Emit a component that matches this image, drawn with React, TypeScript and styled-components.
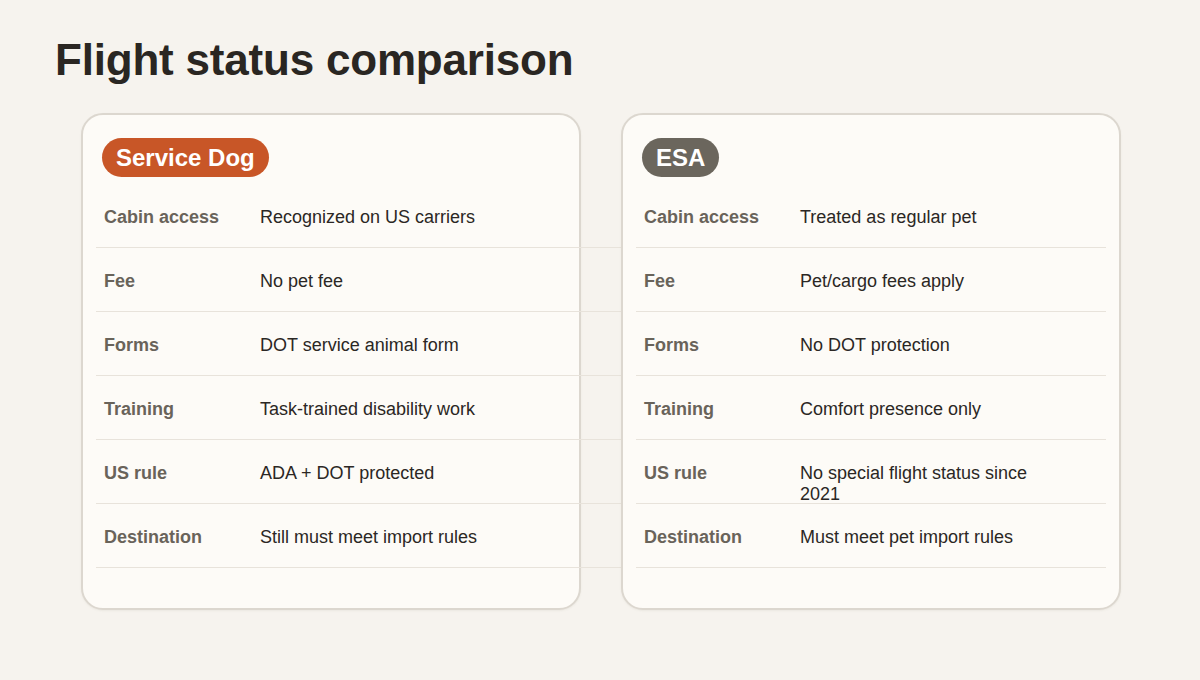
import React from "react";
import styled, { createGlobalStyle } from "styled-components";

const Global = createGlobalStyle`
  html, body { margin: 0; padding: 0; background: #f6f3ee; }
  body { font-family: "Liberation Sans", Arial, sans-serif; }
`;

const Page = styled.div`
  width: 1200px;
  height: 680px;
  box-sizing: border-box;
  padding-top: 34px;
  overflow: hidden;
`;

const Title = styled.h1`
  margin: 0 0 26px 55px;
  font-size: 44px;
  line-height: 1.2;
  font-weight: 700;
  letter-spacing: -0.2px;
  color: #2a2622;
`;

const Cards = styled.div`
  display: flex;
  gap: 40px;
  margin-left: 81px;
`;

const Card = styled.section`
  width: 500px;
  box-sizing: border-box;
  background: #fdfbf7;
  border: 2px solid #dcd7cf;
  border-radius: 22px;
  padding: 23px 13px 40px;
  box-shadow: 0 1px 2px rgba(120, 110, 95, 0.08);
`;

const Badge = styled.div<{ $tone: "orange" | "gray" }>`
  display: inline-block;
  margin: 0 0 7px 6px;
  padding: 0 14px;
  height: 39px;
  line-height: 39px;
  border-radius: 20px;
  font-size: 24px;
  font-weight: 700;
  color: #ffffff;
  background: ${(p) => (p.$tone === "orange" ? "#c85627" : "#6b665d")};
`;

const Table = styled.div<{ $bleed?: boolean }>`
  display: flex;
  flex-direction: column;
  margin-right: ${(p) => (p.$bleed ? "-80px" : "0")};
`;

const Row = styled.div`
  display: grid;
  grid-template-columns: 156px 260px;
  box-sizing: border-box;
  height: 64px;
  padding: 23px 8px 0;
  border-bottom: 1px solid #e8e3db;
  font-size: 18px;
  line-height: 20.7px;
`;

const Label = styled.div`
  font-weight: 700;
  color: #69635a;
`;

const Value = styled.div`
  color: #2b2724;
`;

type Item = [string, string];

const serviceRows: Item[] = [
  ["Cabin access", "Recognized on US carriers"],
  ["Fee", "No pet fee"],
  ["Forms", "DOT service animal form"],
  ["Training", "Task-trained disability work"],
  ["US rule", "ADA + DOT protected"],
  ["Destination", "Still must meet import rules"],
];

const esaRows: Item[] = [
  ["Cabin access", "Treated as regular pet"],
  ["Fee", "Pet/cargo fees apply"],
  ["Forms", "No DOT protection"],
  ["Training", "Comfort presence only"],
  ["US rule", "No special flight status since 2021"],
  ["Destination", "Must meet pet import rules"],
];

const Compare = ({
  title,
  tone,
  rows,
  bleed,
}: {
  title: string;
  tone: "orange" | "gray";
  rows: Item[];
  bleed?: boolean;
}) => (
  <Card>
    <Badge $tone={tone}>{title}</Badge>
    <Table $bleed={bleed}>
      {rows.map(([l, v]) => (
        <Row key={l}>
          <Label>{l}</Label>
          <Value>{v}</Value>
        </Row>
      ))}
    </Table>
  </Card>
);

export default function App() {
  return (
    <Page>
      <Global />
      <Title>Flight status comparison</Title>
      <Cards>
        <Compare title="Service Dog" tone="orange" rows={serviceRows} bleed />
        <Compare title="ESA" tone="gray" rows={esaRows} />
      </Cards>
    </Page>
  );
}
